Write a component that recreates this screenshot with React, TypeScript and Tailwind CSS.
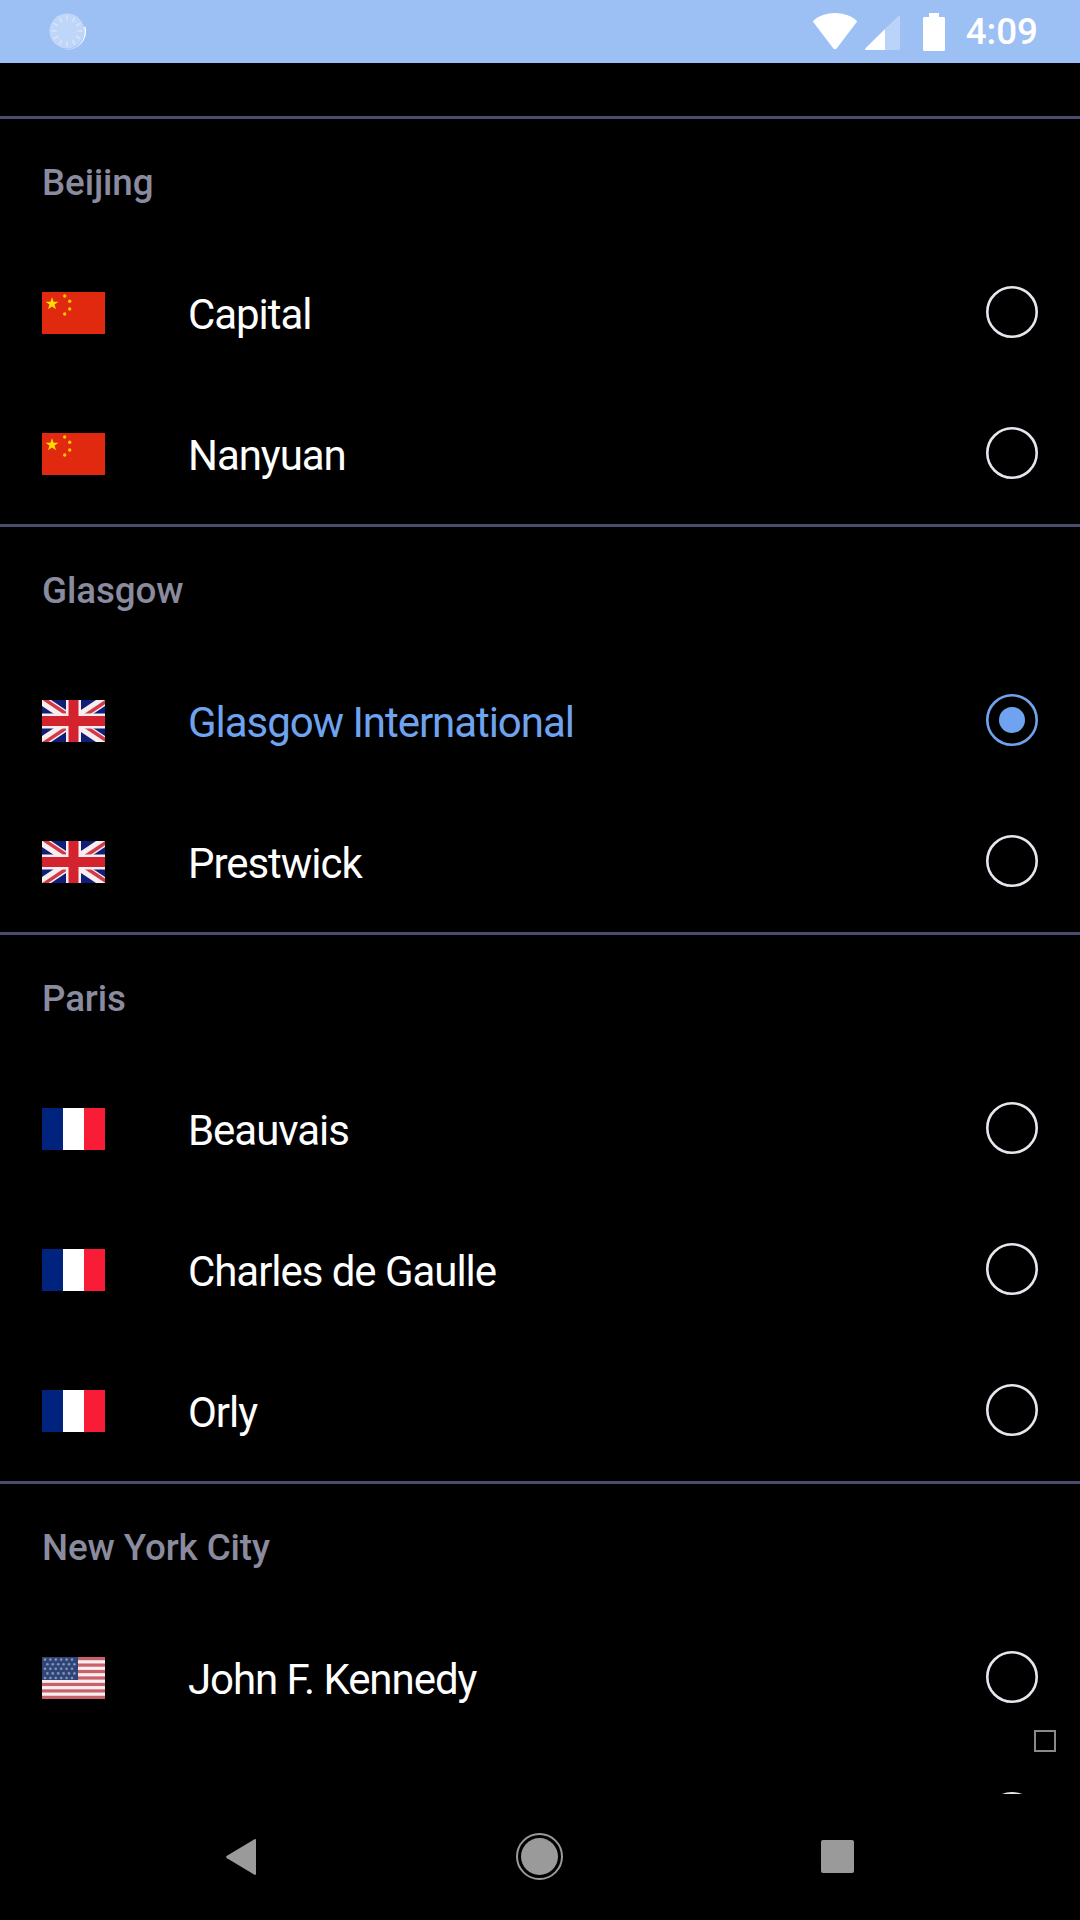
import React from 'react';

type FlagKind = 'cn' | 'uk' | 'fr' | 'us';

type Airport = { name: string; flag: FlagKind; selected?: boolean };

const cities: { title: string; airports: Airport[] }[] = [
  {
    title: 'Beijing',
    airports: [
      { name: 'Capital', flag: 'cn' },
      { name: 'Nanyuan', flag: 'cn' },
    ],
  },
  {
    title: 'Glasgow',
    airports: [
      { name: 'Glasgow International', flag: 'uk', selected: true },
      { name: 'Prestwick', flag: 'uk' },
    ],
  },
  {
    title: 'Paris',
    airports: [
      { name: 'Beauvais', flag: 'fr' },
      { name: 'Charles de Gaulle', flag: 'fr' },
      { name: 'Orly', flag: 'fr' },
    ],
  },
  {
    title: 'New York City',
    airports: [
      { name: 'John F. Kennedy', flag: 'us' },
      // only the top of this row's radio shows above the nav bar
      { name: '', flag: 'us' },
    ],
  },
];

function Flag({ kind }: { kind: FlagKind }) {
  if (kind === 'cn') {
    return (
      <svg viewBox="0 0 63 42" className="w-[63px] h-[42px] shrink-0">
        <rect width="63" height="42" fill="#e1290f" />
        <polygon
          points="10,5 11.5,9.7 16.5,9.7 12.5,12.6 14,17.3 10,14.4 6,17.3 7.5,12.6 3.5,9.7 8.5,9.7"
          fill="#ffde00"
        />
        <circle cx="22.7" cy="4" r="1.7" fill="#fbc400" />
        <circle cx="27.7" cy="9.3" r="1.7" fill="#fbc400" />
        <circle cx="27.7" cy="17" r="1.7" fill="#fbc400" />
        <circle cx="22.7" cy="22" r="1.7" fill="#fbc400" />
      </svg>
    );
  }
  if (kind === 'uk') {
    return (
      <svg viewBox="0 0 63 42" className="w-[63px] h-[42px] shrink-0">
        <rect width="63" height="42" fill="#0f1f78" />
        <path d="M-3 -2L66 44M66 -2L-3 44" stroke="#f8eef0" strokeWidth="10" />
        <path d="M0 0L31.5 21M63 42L31.5 21" stroke="#d23a48" strokeWidth="3.4" transform="translate(2 -1)" />
        <path d="M63 0L31.5 21M0 42L31.5 21" stroke="#d23a48" strokeWidth="3.4" transform="translate(1 1.5)" />
        <path d="M31.5 -2V44M-2 21H65" stroke="#f8eef0" strokeWidth="15" />
        <path d="M31.5 -2V44M-2 21H65" stroke="#d2232f" strokeWidth="10" />
      </svg>
    );
  }
  if (kind === 'fr') {
    return (
      <div className="w-[63px] h-[42px] shrink-0 flex">
        <div className="w-[21px] bg-[#00247d]" />
        <div className="w-[21px] bg-white" />
        <div className="w-[21px] bg-[#f91c36]" />
      </div>
    );
  }
  const stripes = [0, 1, 2, 3, 4, 5, 6];
  const dots: [number, number][] = [];
  for (let row = 0; row < 5; row++) {
    for (let col = 0; col < 6; col++) {
      dots.push([3 + col * 5.4 + (row % 2) * 2.4, 2.6 + row * 4.6]);
    }
  }
  return (
    <svg viewBox="0 0 63 42" className="w-[63px] h-[42px] shrink-0">
      <rect width="63" height="42" fill="#f8f0f0" />
      {stripes.map((i) => (
        <rect key={i} y={i * 6.46} width="63" height="3.23" fill="#c9606a" />
      ))}
      <rect width="36" height="23" fill="#2f4578" />
      {dots.map(([x, y]) => (
        <circle key={`${x}-${y}`} cx={x} cy={y} r="1.3" fill="#8795b6" />
      ))}
    </svg>
  );
}

function Radio({ selected }: { selected?: boolean }) {
  return (
    <svg viewBox="0 0 52 52" className="w-[52px] h-[52px] shrink-0 mb-[2px]">
      <circle
        cx="26"
        cy="26"
        r="24.7"
        fill="none"
        stroke={selected ? '#6fa3f0' : '#e6e6ee'}
        strokeWidth="2.6"
      />
      {selected && <circle cx="26" cy="26" r="13" fill="#6fa3f0" />}
    </svg>
  );
}

function StatusBar() {
  return (
    <div className="h-[63px] bg-[#9cc0f4] flex items-center shrink-0 pl-[49px] pr-[42px]">
      <svg viewBox="0 0 38 38" className="w-[38px] h-[38px]">
        <circle cx="18" cy="18" r="17.5" fill="#c0d6f8" />
        <path d="M36.4 13.8A18 18 0 0 1 15.9 36.2A17.5 17.5 0 0 0 35 14Z" fill="#ffffff" />
        <g stroke="#d6e4fb" strokeWidth="1.6" strokeLinecap="round">
          <path d="M18 3V7M18 29V33M3 18H7M29 18H33" />
          <path d="M10.5 5L12.5 8.5M25.5 5L23.5 8.5M5 10.5L8.5 12.5M31 10.5L27.5 12.5" />
          <path d="M10.5 31L12.5 27.5M25.5 31L23.5 27.5M5 25.5L8.5 23.5M31 25.5L27.5 23.5" />
        </g>
      </svg>
      <div className="flex-1" />
      <svg viewBox="0 0 44 37" className="w-[44px] h-[37px] mr-[8px]">
        <path
          d="M22 0C13.5 0 6 2.8 0.6 7.4C0 8 0 8.6 0.4 9.2L20.4 35.4C21.2 36.4 22.8 36.4 23.6 35.4L43.6 9.2C44 8.6 44 8 43.4 7.4C38 2.8 30.5 0 22 0Z"
          fill="#ffffff"
        />
      </svg>
      <svg viewBox="0 0 35 35" className="w-[35px] h-[35px] mr-[23px] mt-[2px]">
        <path d="M34 0.5C34.6 0 35 0.4 35 1V33.5C35 34.4 34.4 35 33.5 35H20V14Z" fill="#bcd3f9" />
        <path d="M20 14V35H1C0 35 -0.2 34 0.5 33.3Z" fill="#ffffff" />
      </svg>
      <svg viewBox="0 0 22 38" className="w-[22px] h-[38px] mr-[21px]">
        <path
          d="M6 0H16V4H20.5C21.4 4 22 4.6 22 5.5V36.5C22 37.4 21.4 38 20.5 38H1.5C0.6 38 0 37.4 0 36.5V5.5C0 4.6 0.6 4 1.5 4H6Z"
          fill="#ffffff"
        />
      </svg>
      <span className="text-[36.75px] font-medium leading-none text-white mt-[1px]">4:09</span>
    </div>
  );
}

function NavBar() {
  return (
    <div className="h-[126px] bg-black flex items-center justify-center shrink-0 pb-[1px] pr-[2px]">
      <div className="w-[298px] flex justify-center">
        <svg viewBox="0 0 30 36" className="w-[30px] h-[36px]">
          <path
            d="M28.5 0.3C29.4 -0.2 30 0.4 30 1.4V34.6C30 35.6 29.4 36.2 28.5 35.7L1 19.2C-0.2 18.4 -0.2 17.6 1 16.8Z"
            fill="#9a9a9a"
          />
        </svg>
      </div>
      <div className="w-[298px] flex justify-center">
        <div className="w-[47px] h-[47px] rounded-full border-2 border-[#9a9a9a] flex items-center justify-center">
          <div className="w-[37px] h-[37px] rounded-full bg-[#9a9a9a]" />
        </div>
      </div>
      <div className="w-[298px] flex justify-center">
        <div className="w-[33px] h-[33px] rounded-[2px] bg-[#9a9a9a]" />
      </div>
    </div>
  );
}

export default function App() {
  return (
    <div
      className="relative w-[1080px] h-[1920px] bg-black flex flex-col overflow-hidden"
      style={{ fontFamily: 'Roboto, sans-serif' }}
    >
      <StatusBar />
      <div className="flex-1 min-h-0 overflow-hidden pt-[53px]">
        {cities.map((city) => (
          <section key={city.title} className="border-t-[3px] border-[#4b4b6b]">
            <div className="h-[123px] pl-[42px] pt-[45px]">
              <h2 className="text-[36.75px] leading-[38px] tracking-[-0.1px] font-medium text-[#8b8b9f]">{city.title}</h2>
            </div>
            {city.airports.map((airport) => (
              <div key={airport.name || 'next'} className="h-[141px] flex items-center pl-[42px] pr-[42px]">
                <Flag kind={airport.flag} />
                <span
                  className={
                    airport.selected
                      ? 'ml-[83px] flex-1 text-[42px] leading-[48px] tracking-[-1.05px] mt-[4px] text-[#6fa3f0]'
                      : 'ml-[83px] flex-1 text-[42px] leading-[48px] tracking-[-1.05px] mt-[4px] text-white'
                  }
                >
                  {airport.name}
                </span>
                <Radio selected={airport.selected} />
              </div>
            ))}
          </section>
        ))}
      </div>
      <NavBar />
      <div className="absolute left-[1034px] top-[1730px] w-[22px] h-[22px] border-2 border-[#8a8a8a]" />
    </div>
  );
}
